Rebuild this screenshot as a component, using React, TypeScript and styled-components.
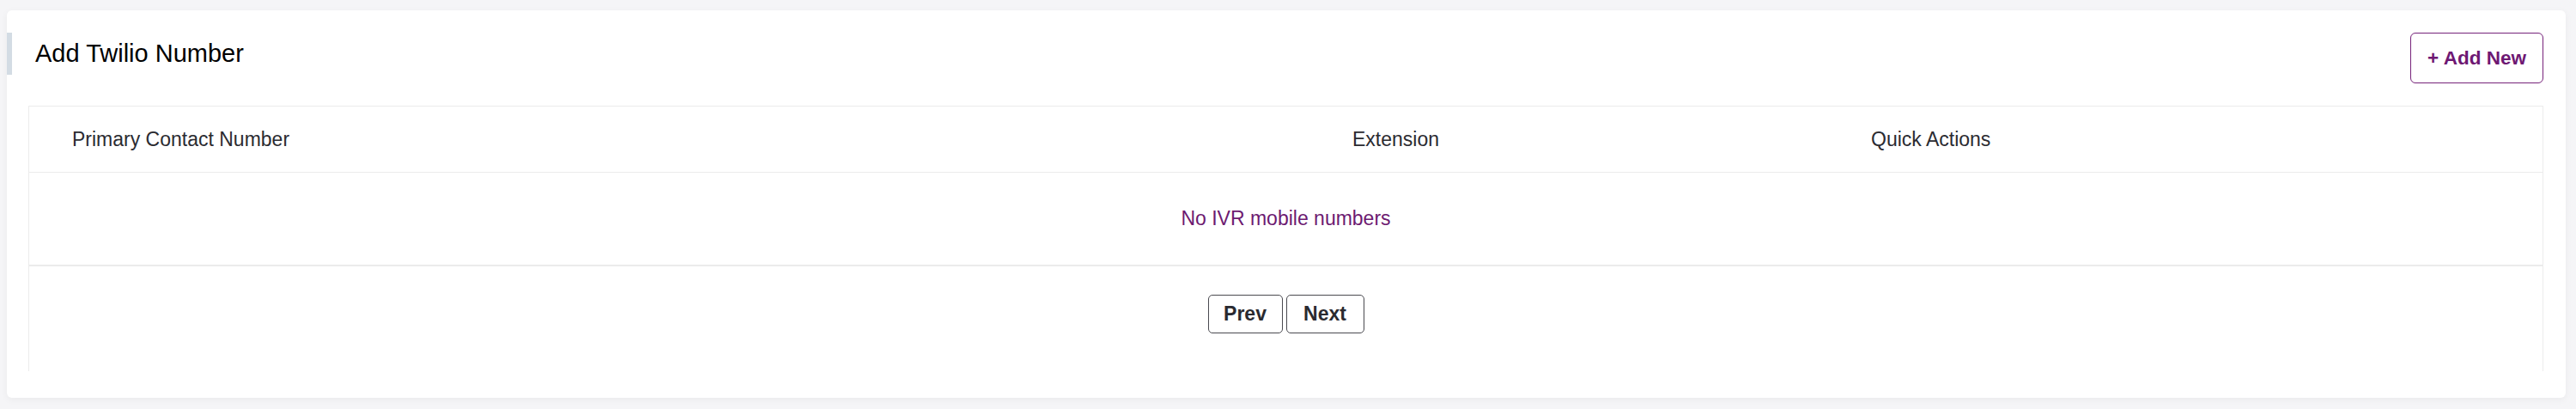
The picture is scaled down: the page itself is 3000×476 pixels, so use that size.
import styled, { createGlobalStyle } from 'styled-components';

const GlobalStyle = createGlobalStyle`
  *, *::before, *::after {
    box-sizing: border-box;
  }

  html, body {
    margin: 0;
    padding: 0;
    background: #f5f5f7;
    font-family: "Liberation Sans", Arial, sans-serif;
  }
`;

const StyledPage = styled.div`
  padding: 12px 12px 13px 8px;
  background: #f5f5f7;
`;

const StyledCard = styled.section`
  background: #ffffff;
  border-radius: 6px;
  padding: 26px 26px 31px 25px;
  box-shadow: 0 2px 8px rgba(0, 0, 0, 0.05);
`;

const StyledHeader = styled.div`
  display: flex;
  justify-content: space-between;
  align-items: flex-start;
`;

const StyledTitle = styled.h2`
  margin: 0 0 0 -25px;
  height: 49px;
  display: flex;
  align-items: center;
  padding-left: 27px;
  border-left: 6px solid #d3dce4;
  font-size: 29px;
  font-weight: 400;
  color: #000000;
`;

const StyledAddButton = styled.button`
  width: 155px;
  height: 59px;
  border: 1px solid #76237a;
  border-radius: 6px;
  background: #ffffff;
  color: #6e1873;
  font-family: "Liberation Sans", Arial, sans-serif;
  font-size: 22.5px;
  font-weight: 700;
  cursor: pointer;
`;

const StyledTable = styled.div`
  margin-top: 26px;
  border: 1px solid #ececec;
  border-bottom: none;
`;

const StyledRow = styled.div<{ $height: number; $border: number }>`
  display: grid;
  grid-template-columns: 1491px 604px 1fr;
  align-items: center;
  height: ${({ $height }) => $height}px;
  border-bottom: ${({ $border }) => $border}px solid #ebebeb;
`;

const StyledHeadCell = styled.div`
  padding-left: 50px;
  font-size: 23px;
  color: #2b2b31;
`;

const StyledEmpty = styled.div`
  grid-column: 1 / -1;
  text-align: center;
  font-size: 23px;
  color: #6d1a71;
`;

const StyledPager = styled.div`
  display: flex;
  justify-content: center;
  gap: 4px;
  padding: 33px 0 44px;
`;

const StyledPageButton = styled.button<{ $width: number }>`
  width: ${({ $width }) => $width}px;
  height: 45px;
  border: 1px solid #4a4a50;
  border-radius: 5px;
  background: #ffffff;
  color: #2a2a30;
  font-family: "Liberation Sans", Arial, sans-serif;
  font-size: 23px;
  font-weight: 700;
  padding: 0;
  cursor: pointer;
`;

export default function App() {
  return (
    <>
      <GlobalStyle />
      <StyledPage>
        <StyledCard>
          <StyledHeader>
            <StyledTitle>Add Twilio Number</StyledTitle>
            <StyledAddButton>+ Add New</StyledAddButton>
          </StyledHeader>
          <StyledTable>
            <StyledRow $height={77} $border={1}>
              <StyledHeadCell>Primary Contact Number</StyledHeadCell>
              <StyledHeadCell>Extension</StyledHeadCell>
              <StyledHeadCell>Quick Actions</StyledHeadCell>
            </StyledRow>
            <StyledRow $height={109} $border={2}>
              <StyledEmpty>No IVR mobile numbers</StyledEmpty>
            </StyledRow>
            <StyledPager>
              <StyledPageButton $width={87}>Prev</StyledPageButton>
              <StyledPageButton $width={91}>Next</StyledPageButton>
            </StyledPager>
          </StyledTable>
        </StyledCard>
      </StyledPage>
    </>
  );
}
